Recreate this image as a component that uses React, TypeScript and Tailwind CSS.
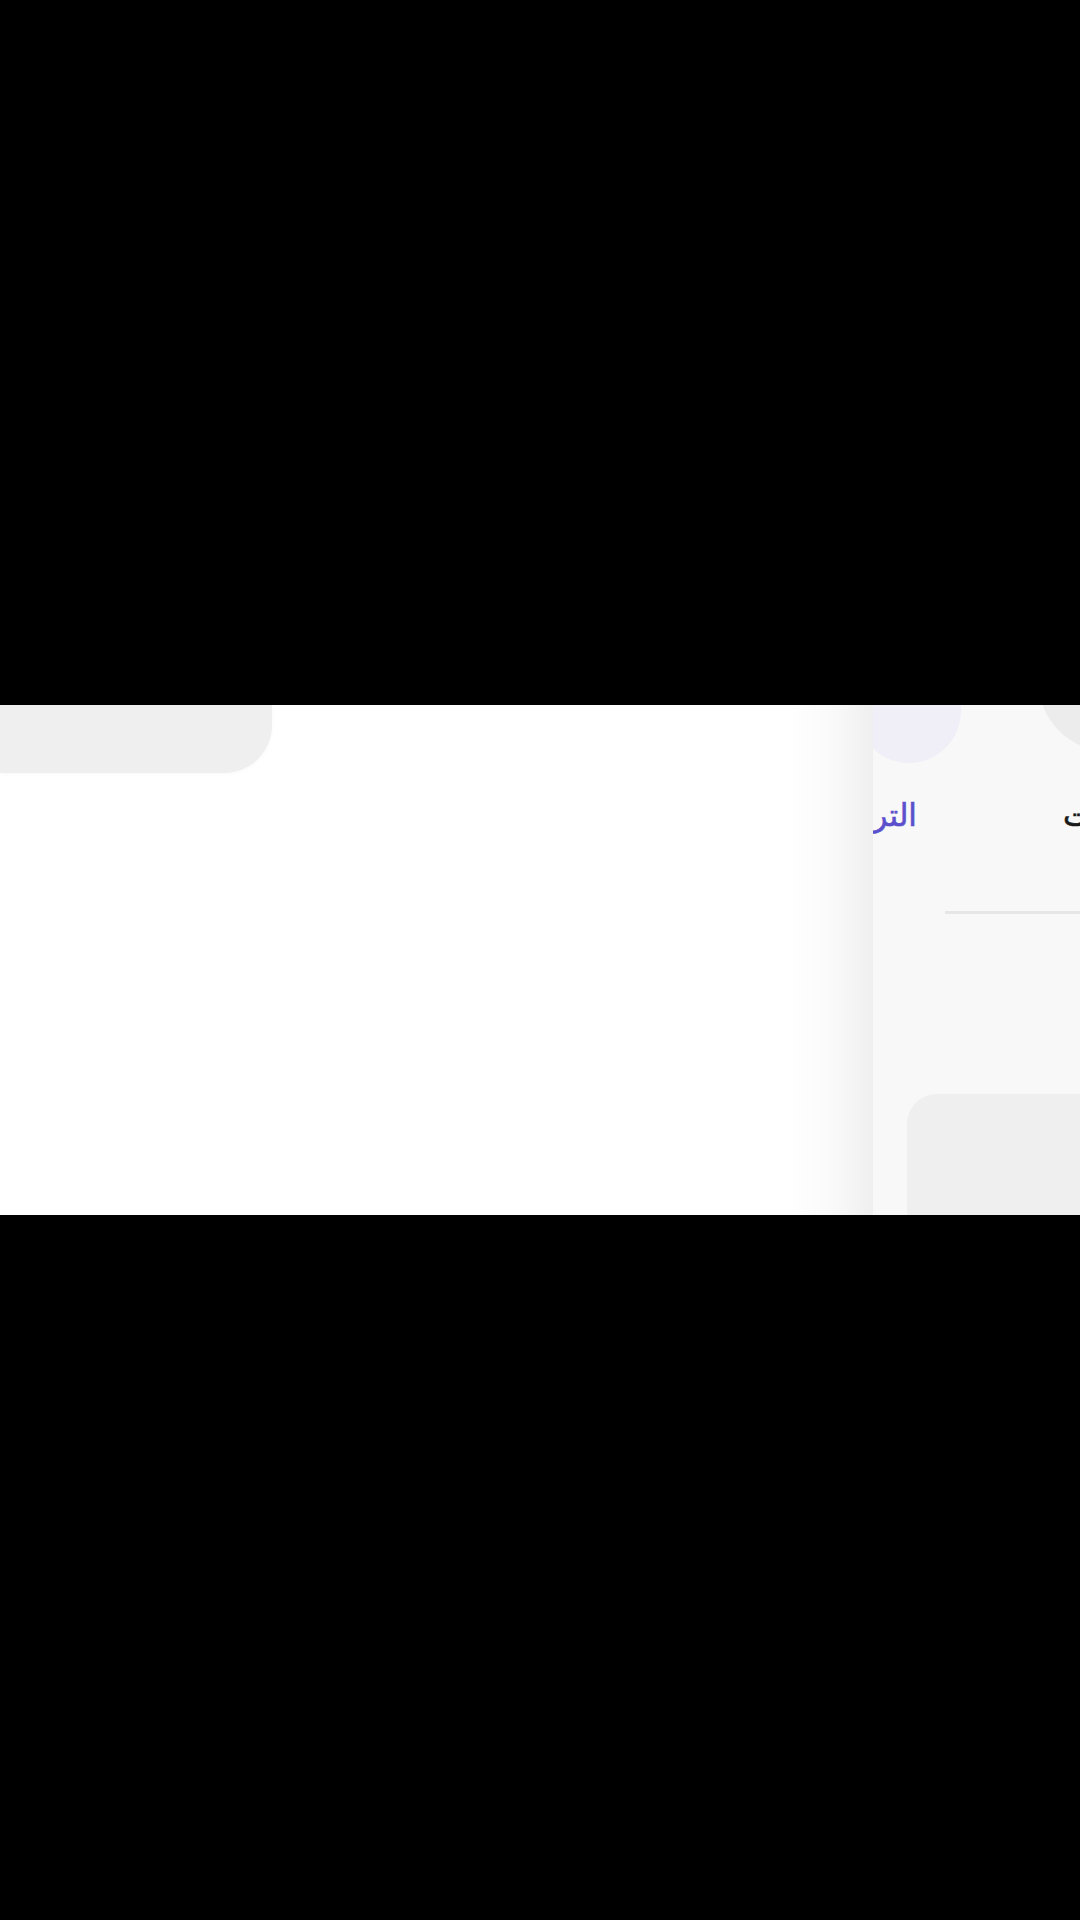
import React from 'react';

const arabic = { fontFamily: '"DejaVu Sans", "Noto Sans", sans-serif' };

export default function App() {
  return (
    <div className="bg-black h-[1920px] w-[1080px] flex flex-col overflow-hidden">
      <div className="h-[705px] shrink-0" />
      <div className="h-[510px] shrink-0 bg-white flex relative overflow-hidden">
        {/* main area */}
        <div className="flex-1 flex flex-col">
          <div className="w-[272px] h-[68px] bg-[#efefef] rounded-br-[48px] shadow-[0_1px_4px_rgba(0,0,0,0.03)]" />
        </div>

        {/* drawer shadow */}
        <div className="w-[84px] shrink-0 bg-gradient-to-r from-white via-[#fafafa] to-[#efeff0]" />

        {/* side panel */}
        <div className="w-[207px] shrink-0 bg-[#f8f8f8] flex flex-col overflow-hidden relative">
          <div className="absolute left-[-16px] top-[-46px] w-[104px] h-[104px] rounded-full bg-[#f0eff8]" />
          <div className="absolute left-[165px] top-[-97px] w-[144px] h-[144px] rounded-full bg-[#ececec]" />

          <div className="flex items-center h-[40px] mt-[90px] ml-[-96px] whitespace-nowrap relative" style={arabic}>
            <span dir="rtl" className="w-[140px] shrink-0 text-right text-[31px] text-[#5b50cc] [-webkit-text-stroke:0.6px_#5b50cc]">
              الترتيب
            </span>
            <span className="w-[146px] shrink-0" />
            <span dir="rtl" className="shrink-0 text-left text-[31px] text-[#1a1a1a] [-webkit-text-stroke:0.6px_#1a1a1a]">
              المنتجات
            </span>
          </div>

          <div className="mt-[76px] ml-[72px] h-[3px] shrink-0 bg-[#e6e6e6]" />

          <div className="mt-[180px] ml-[34px] w-[200px] h-[180px] shrink-0 rounded-[30px] bg-[#efefef]" />
        </div>
      </div>
    </div>
  );
}
